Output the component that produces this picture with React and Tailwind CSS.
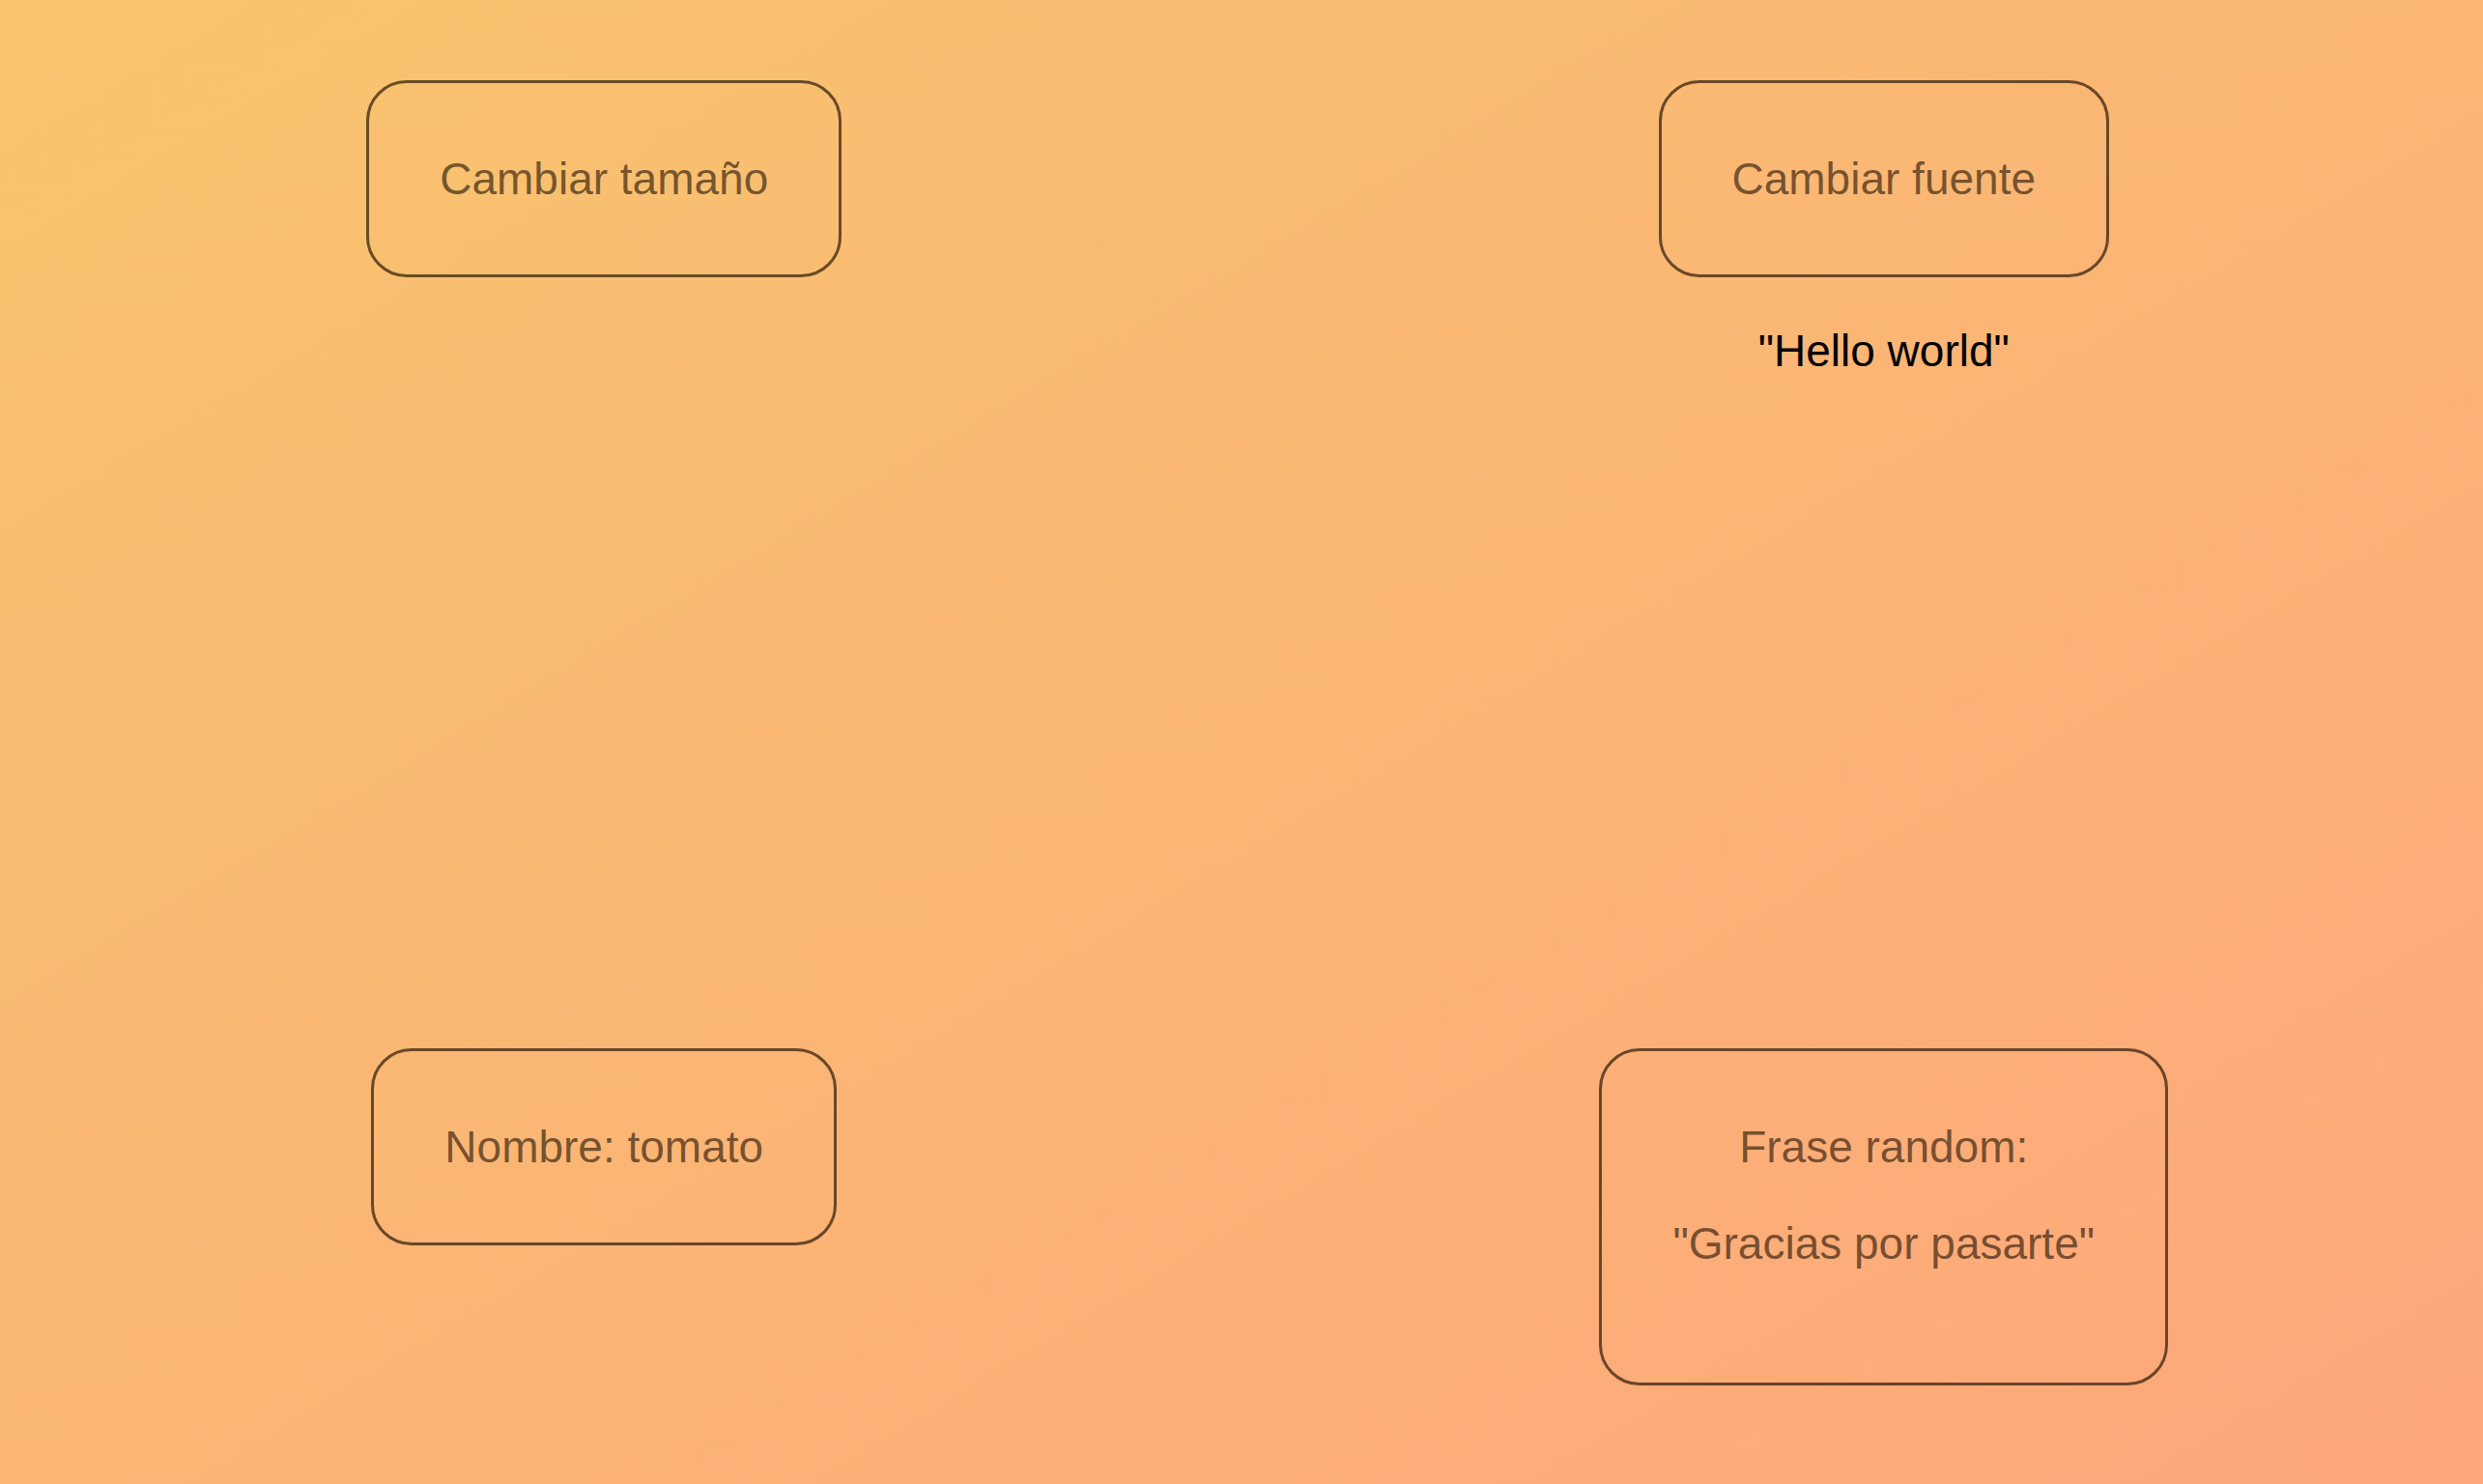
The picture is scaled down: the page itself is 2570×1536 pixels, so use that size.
import React from "react";

function Box({ children, className = "" }) {
  return (
    <button
      className={
        "rounded-[42px] border-[3px] border-[rgba(30,15,0,0.66)] text-[rgba(30,15,0,0.62)] bg-transparent px-[73px] " +
        className
      }
    >
      {children}
    </button>
  );
}

export default function App() {
  const [phrase] = React.useState('"Gracias por pasarte"');

  return (
    <div
      className="h-screen w-full overflow-hidden bg-linear-to-br from-[#f8c56e] to-[#fda67b] pt-[83px] pl-[5px] text-[46px] leading-[52px]"
      style={{ fontFamily: '"Liberation Sans", Arial, sans-serif' }}
    >
      <div className="grid grid-cols-2 grid-rows-[1002px_auto] gap-x-[84px]">
        <div className="flex flex-col items-center">
          <Box className="py-[73px]">Cambiar tamaño</Box>
        </div>
        <div className="flex flex-col items-center">
          <Box className="py-[73px]">Cambiar fuente</Box>
          <p className="mt-[50px] text-black">"Hello world"</p>
        </div>
        <div className="flex flex-col items-center">
          <Box className="py-[73px]">Nombre: tomato</Box>
        </div>
        <div className="flex flex-col items-center">
          <Box className="pt-[73px] pb-[118px]">
            <p>Frase random:</p>
            <p className="mt-[48px]">{phrase}</p>
          </Box>
        </div>
      </div>
    </div>
  );
}
